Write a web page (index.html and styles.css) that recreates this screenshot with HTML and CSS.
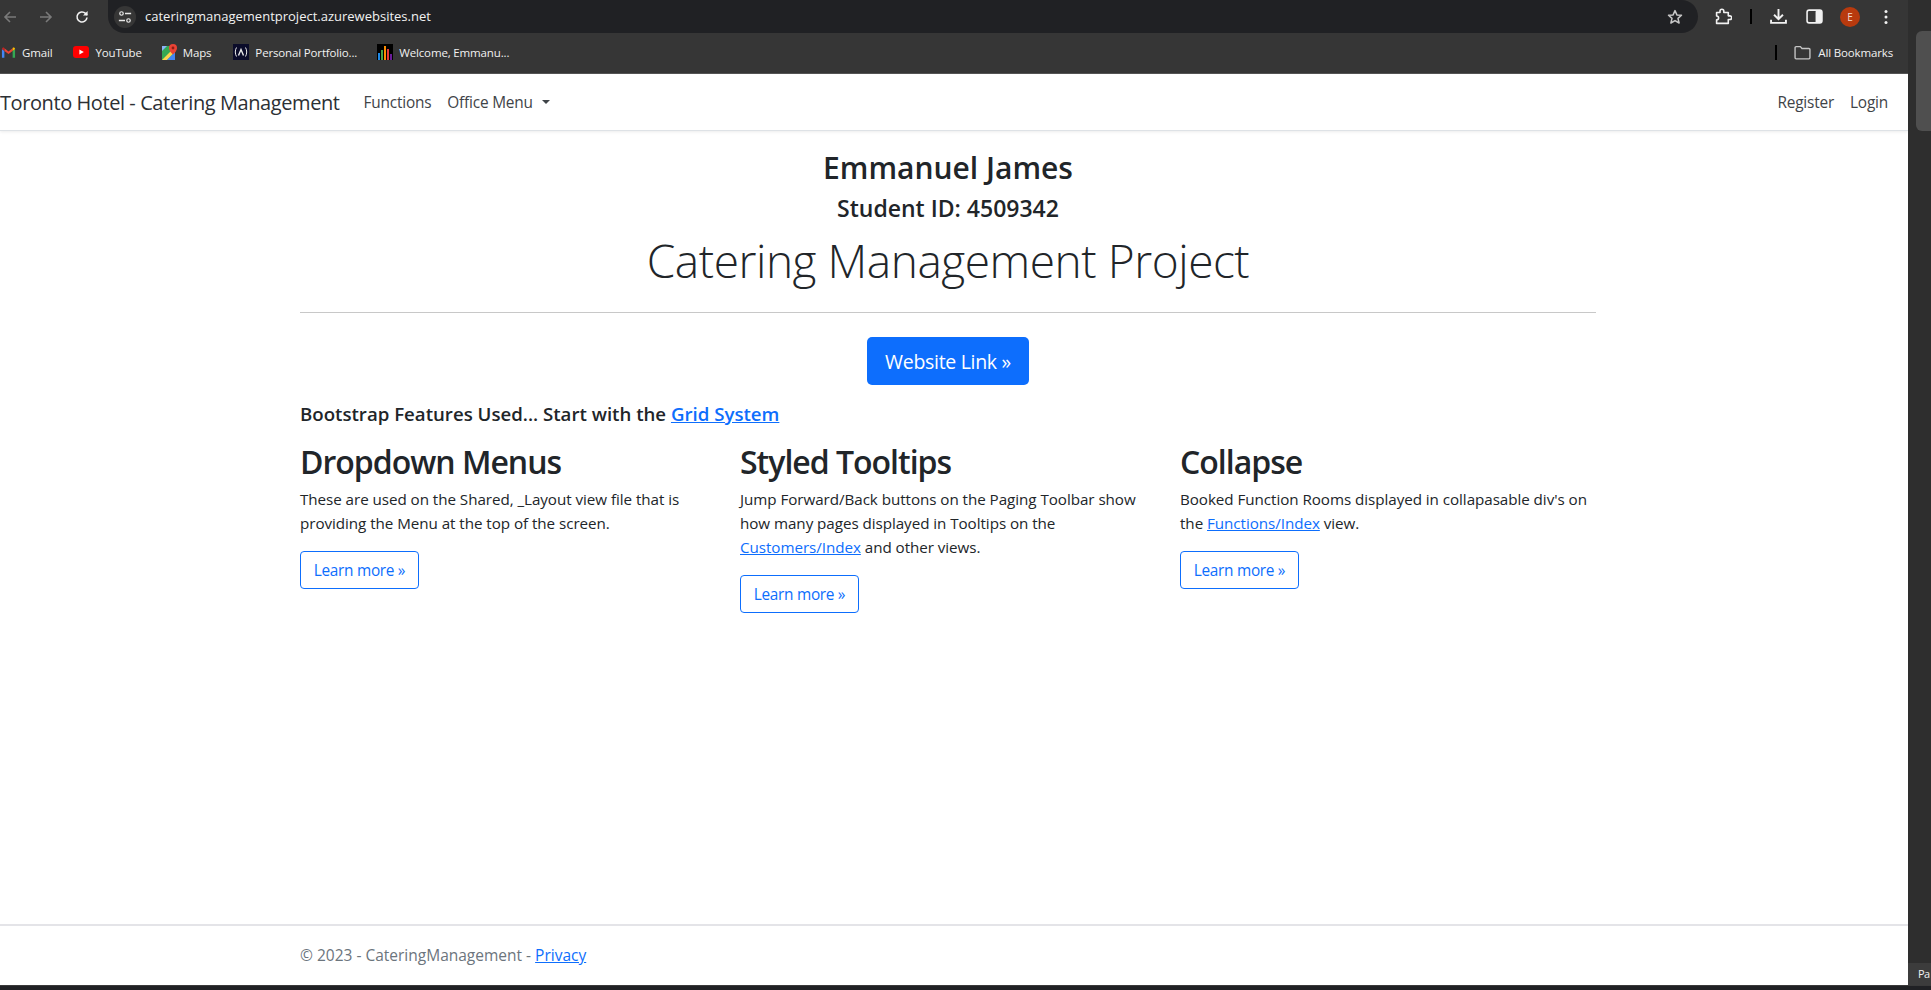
FILE: index.html
```html
<!DOCTYPE html>
<html lang="en">
<head>
<meta charset="utf-8">
<title>Catering Management Project</title>
<link rel="stylesheet" href="styles.css">
</head>
<body>
<div class="window">
  <div class="browser">
    <div class="toolbar">
      <div class="nav-icons">
        <svg class="ic ic-back" viewBox="0 0 16 16"><path d="M14 8H3M8 3 3 8l5 5" fill="none" stroke="#7a7a7a" stroke-width="1.6"/></svg>
        <svg class="ic ic-fwd" viewBox="0 0 16 16"><path d="M2 8h11M8 3l5 5-5 5" fill="none" stroke="#7a7a7a" stroke-width="1.6"/></svg>
        <svg class="ic ic-reload" viewBox="0 0 16 16"><path d="M13 8.5A5 5 0 1 1 11.5 4.4L13 6" fill="none" stroke="#f1f1f1" stroke-width="1.6"/><path d="M13.6 2v4.6H9z" fill="#f1f1f1"/></svg>
      </div>
      <div class="omnibox">
        <span class="tune"><svg viewBox="0 0 16 16" width="14" height="14"><circle cx="4" cy="4" r="2" fill="none" stroke="#e8e8e8" stroke-width="1.4"/><path d="M8 4h7M1 12h7" stroke="#e8e8e8" stroke-width="1.5"/><circle cx="12" cy="12" r="2" fill="none" stroke="#e8e8e8" stroke-width="1.4"/></svg></span>
        <span class="url">cateringmanagementproject.azurewebsites.net</span>
        <svg class="star" viewBox="0 0 16 16"><path d="m8 1.6 1.9 4.3 4.6.4-3.5 3.1 1.1 4.6L8 11.6 3.9 14l1.1-4.6-3.5-3.1 4.6-.4z" fill="none" stroke="#c8c8c8" stroke-width="1.5" stroke-linejoin="round"/></svg>
      </div>
      <div class="tools">
        <svg class="tool tool-ext" viewBox="0 0 16 16"><path d="M1.5 4.2h3.2V3a1.8 1.8 0 0 1 3.600 0v1.200h4.200v3.200H14a1.700 1.700 0 0 1 0 3.400h-1.500v3.700h-11v-3.400c2.500 0 2.500-3.600 0-3.600z" fill="none" stroke="#f1f1f1" stroke-width="1.5" stroke-linejoin="round"/></svg>
        <span class="tool-sep"></span>
        <svg class="tool tool-dl" viewBox="0 0 16 16"><path d="M8 1v9M3.800 6.400 8 10.500l4.200-4.100" fill="none" stroke="#f1f1f1" stroke-width="1.800"/><path d="M1 11v3h14v-3" fill="none" stroke="#f1f1f1" stroke-width="1.800"/></svg>
        <svg class="tool tool-side" viewBox="0 0 16 16"><rect x="1" y="2" width="14" height="12" rx="2" fill="none" stroke="#f1f1f1" stroke-width="1.500"/><rect x="9" y="2" width="6" height="12" rx="1.500" fill="#f1f1f1"/></svg>
        <span class="avatar">E</span>
        <svg class="tool-dots" viewBox="0 0 4 16"><circle cx="2" cy="2.500" r="1.500" fill="#f1f1f1"/><circle cx="2" cy="8" r="1.500" fill="#f1f1f1"/><circle cx="2" cy="13.500" r="1.500" fill="#f1f1f1"/></svg>
      </div>
    </div>
    <div class="bookmarks">
      <a class="bm bm-gmail"><svg class="fav fav-gmail" viewBox="0 0 16 16"><path d="M1 13.500V4.300l2.600 2v7.200z" fill="#4285f4"/><path d="M12.400 13.500V6.300l2.600-2v9.200z" fill="#34a853"/><path d="M3.600 6.300V3.500L8 6.900l4.400-3.400v2.800L8 9.700z" fill="#ea4335"/><path d="M1 4.300C1 2.900 2.600 2.200 3.600 3.100v3.200z" fill="#c5221f"/><path d="M15 4.300c0-1.400-1.600-2.100-2.600-1.200v3.200z" fill="#fbbc04"/></svg>Gmail</a>
      <a class="bm bm-yt"><svg class="fav fav-yt" viewBox="0 0 16 12"><rect width="16" height="12" rx="3" fill="#f00"/><path d="m6.400 3.400 4.400 2.600-4.400 2.600z" fill="#fff"/></svg>YouTube</a>
      <a class="bm bm-maps"><svg class="fav fav-maps" viewBox="0 0 15 16"><path d="M0 2h13v14H0z" fill="#34a853"/><path d="M0 16 13 3v5L5 16z" fill="#fbd34d"/><path d="m5 16 8-8v8z" fill="#4285f4"/><path d="M0 2h5L0 7z" fill="#8ab4f8"/><path d="M11 0a4 4 0 0 0-4 4c0 3 4 6.500 4 6.500S15 7 15 4a4 4 0 0 0-4-4z" fill="#ea4335"/><circle cx="11" cy="4" r="1.400" fill="#8f1d15"/></svg>Maps</a>
      <a class="bm bm-pf"><svg class="fav fav-pf" viewBox="0 0 16 16"><rect width="16" height="16" fill="#0b0c2a"/><path d="M3.500 3.500c-1.600 2.800-1.600 6.200 0 9M12.500 3.500c1.600 2.800 1.600 6.200 0 9" fill="none" stroke="#e8e8e8" stroke-width="1"/><path d="m5.500 11.500 2.500-6 2.500 6" fill="none" stroke="#e8e8e8" stroke-width="1.400"/></svg>Personal Portfolio...</a>
      <a class="bm bm-wel"><svg class="fav fav-wel" viewBox="0 0 16 16"><rect width="16" height="16" fill="#000"/><rect x="1" y="9" width="2" height="7" fill="#1e88e5"/><rect x="4" y="6" width="2" height="10" fill="#43a047"/><rect x="7" y="2" width="2" height="14" fill="#fb8c00"/><rect x="10" y="5" width="2" height="11" fill="#e53935"/><rect x="13" y="10" width="2" height="6" fill="#6a1b9a"/></svg>Welcome, Emmanu...</a>
      <span class="bm-sep"></span>
      <a class="bm bm-all"><svg class="fav fav-folder" viewBox="0 0 16 14"><path d="M1 2.500a1 1 0 0 1 1-1h4l1.500 1.700H14a1 1 0 0 1 1 1V12a1 1 0 0 1-1 1H2a1 1 0 0 1-1-1z" fill="none" stroke="#c4c4c4" stroke-width="1.300"/></svg>All Bookmarks</a>
    </div>
    <div class="page">
      <nav class="navbar">
        <a class="brand">Toronto Hotel - Catering Management</a>
        <ul class="nav-list">
          <li class="nav-item nav-functions">Functions</li>
          <li class="nav-item nav-office">Office Menu<span class="caret"></span></li>
        </ul>
        <ul class="nav-list nav-right">
          <li class="nav-item nav-register">Register</li>
          <li class="nav-item nav-login">Login</li>
        </ul>
      </nav>
      <main class="main">
        <div class="hero">
          <h3 class="h-name">Emmanuel James</h3>
          <h4 class="h-id">Student ID: 4509342</h4>
          <h1 class="display">Catering Management Project</h1>
        </div>
        <hr class="rule">
        <div class="cta"><a class="btn-primary">Website Link »</a></div>
        <h5 class="features">Bootstrap Features Used... Start with the <a class="link">Grid System</a></h5>
        <div class="cols">
          <section class="col">
            <h2 class="col-title">Dropdown Menus</h2>
            <p class="col-text">These are used on the Shared, _Layout view file that is providing the Menu at the top of the screen.</p>
            <a class="btn-outline">Learn more »</a>
          </section>
          <section class="col">
            <h2 class="col-title">Styled Tooltips</h2>
            <p class="col-text">Jump Forward/Back buttons on the Paging Toolbar show how many pages displayed in Tooltips on the <a class="link">Customers/Index</a> and other views.</p>
            <a class="btn-outline">Learn more »</a>
          </section>
          <section class="col">
            <h2 class="col-title">Collapse</h2>
            <p class="col-text">Booked Function Rooms displayed in collapasable div's on the <a class="link">Functions/Index</a> view.</p>
            <a class="btn-outline">Learn more »</a>
          </section>
        </div>
      </main>
      <footer class="footer">© 2023 - CateringManagement - <a class="link">Privacy</a></footer>
    </div>
  </div>
  <aside class="side">
    <div class="thumb"></div>
    <div class="side-tab">Pa</div>
  </aside>
</div>
<div class="bottom-bar"></div>
</body>
</html>
```
FILE: styles.css
```css
* { box-sizing: border-box; }
html, body { margin: 0; height: 990px; overflow: hidden; }
body {
  font-family: "Open Sans", "Noto Sans", sans-serif;
  font-size: 16px;
  color: #212529;
  background: #202124;
  display: flex;
  flex-direction: column;
}
.window { flex: 1; display: flex; min-height: 0; }
.browser { flex: 1; display: flex; flex-direction: column; min-width: 0; }

/* browser chrome */
.toolbar { height: 33px; background: #363636; display: flex; align-items: center; }
.nav-icons { width: 108px; display: flex; align-items: center; padding-left: 2px; }
.ic { width: 16px; height: 16px; display: block; }
.ic-fwd { margin-left: 20px; }
.ic-reload { margin-left: 20px; }
.omnibox {
  width: 1590px; height: 33px; background: #202124;
  border-radius: 0 17px 17px 17px / 0 17px 17px 17px;
  display: flex; align-items: center; padding: 0 15px 0 6px;
}
.tune { width: 22px; height: 22px; border-radius: 50%; background: #363636; display: flex; align-items: center; justify-content: center; }
.url { margin-left: 9px; margin-bottom: 2px; color: #f1f1f1; font-size: 13px; flex: 1; }
.star { width: 16px; height: 16px; }
.tools { flex: 1; display: flex; align-items: center; padding-left: 17px; }
.tool { width: 17px; height: 17px; display: block; }
.tool-sep { width: 2px; height: 15px; background: #000; margin-left: 18px; }
.tool-dl { margin-left: 18px; }
.tool-side { margin-left: 19px; }
.avatar {
  width: 20px; height: 20px; border-radius: 50%; background: #b83a0e; color: #f3d9cf;
  font-size: 10px; display: flex; align-items: center; justify-content: center; margin-left: 17px;
}
.tool-dots { width: 4px; height: 16px; margin-left: 24px; }

.bookmarks {
  height: 41px; background: #363636; border-bottom: 1px solid #555; padding-bottom: 2px;
  display: flex; align-items: center; color: #f1f1f1; font-size: 11.5px; letter-spacing: -0.15px;
}
.bm { display: flex; align-items: center; white-space: nowrap; }
.fav { display: block; flex: none; }
.fav-gmail { width: 15px; height: 15px; margin-right: 6px; }
.bm-gmail { margin-left: 1px; }
.fav-yt { width: 16px; height: 12px; margin-right: 6px; }
.bm-yt { margin-left: 21px; }
.fav-maps { width: 15px; height: 16px; margin-right: 6px; }
.bm-maps { margin-left: 20px; }
.fav-pf { width: 16px; height: 16px; margin-right: 6px; }
.bm-pf { margin-left: 22px; }
.fav-wel { width: 16px; height: 16px; margin-right: 6px; }
.bm-wel { margin-left: 20px; }
.bm-sep { width: 2px; height: 15px; background: #000; margin-left: auto; }
.fav-folder { width: 17px; height: 15px; margin-right: 7px; }
.bm-all { margin-left: 17px; margin-right: 15px; }

/* page */
.page { flex: 1; background: #fff; display: flex; flex-direction: column; min-height: 0; }
.navbar {
  height: 57px; display: flex; align-items: center; flex: none;
  border-bottom: 1px solid #dee2e6; box-shadow: 0 1px 3px rgba(0,0,0,.08);
  color: #3f4448; padding-right: 20px;
}
.brand { font-size: 20px; letter-spacing: -0.42px; color: #2c3034; white-space: nowrap; }
.nav-list { list-style: none; display: flex; margin: 0; padding: 0; align-items: center; }
.nav-item { font-size: 15.4px; letter-spacing: -0.2px; white-space: nowrap; }
.nav-functions { margin-left: 24px; }
.nav-office { margin-left: 16px; display: flex; align-items: center; }
.caret { width: 0; height: 0; border: 4px solid transparent; border-top-color: #3f4448; border-bottom: 0; margin-left: 9px; }
.nav-right { margin-left: auto; }
.nav-login { margin-left: 16px; }

.main { flex: 1; width: 1296px; margin-left: 300px; padding-top: 20px; }
.hero { text-align: center; }
.h-name { margin: 0; font-size: 30px; font-weight: 600; line-height: 34px; }
.h-id { margin: 9px 0 0; font-size: 23px; font-weight: 600; line-height: 29px; }
.display { margin: 4px 0 0; font-size: 46px; font-weight: 300; line-height: 67px; letter-spacing: -0.45px; }
.rule { border: 0; border-top: 1px solid #c8c8c8; margin: 18px 0 0; }
.cta { display: flex; justify-content: center; margin-top: 24px; }
.btn-primary {
  width: 162px; height: 48px; background: #0d6efd; color: #fff; border-radius: 5px;
  display: flex; align-items: center; justify-content: center; font-size: 19.5px; letter-spacing: -0.3px;
}
.features { margin: 16px 0 0; font-size: 18.65px; font-weight: 600; line-height: 26px; }
.link { color: #0d6efd; text-decoration: underline; }
.cols { display: grid; grid-template-columns: 416px 416px 416px; column-gap: 24px; margin-top: 15px; }
.col-title { margin: 0; font-size: 32px; font-weight: 600; line-height: 40px; letter-spacing: -1px; }
.col-text { margin: 5px 0 0; font-size: 15.2px; line-height: 24px; letter-spacing: -0.05px; }
.btn-outline {
  display: flex; width: 119px; height: 38px; margin-top: 16px; border: 1px solid #0d6efd; border-radius: 4px;
  color: #0d6efd; align-items: center; justify-content: center; font-size: 15.4px; letter-spacing: -0.3px;
}
.footer {
  height: 61px; flex: none; border-top: 2px solid #e4e4e8; padding: 17px 0 0 300px;
  color: #6c757d; font-size: 15.5px; line-height: 24px;
}

/* right edge */
.side { width: 23px; background: #2e2e2e; display: flex; flex-direction: column; align-items: flex-end; }
.thumb { width: 15px; height: 100px; margin-top: 31px; background: #4f4f4f; border-radius: 6px 0 0 6px; }
.side-tab { margin-top: auto; width: 23px; height: 22px; background: #3c3c3c; color: #f1f1f1; font-size: 11px; letter-spacing: -0.5px; line-height: 22px; padding-left: 10px; white-space: nowrap; }
.bottom-bar { height: 5px; background: #202124; border-top: 1px solid #3a3a3a; flex: none; }
```
